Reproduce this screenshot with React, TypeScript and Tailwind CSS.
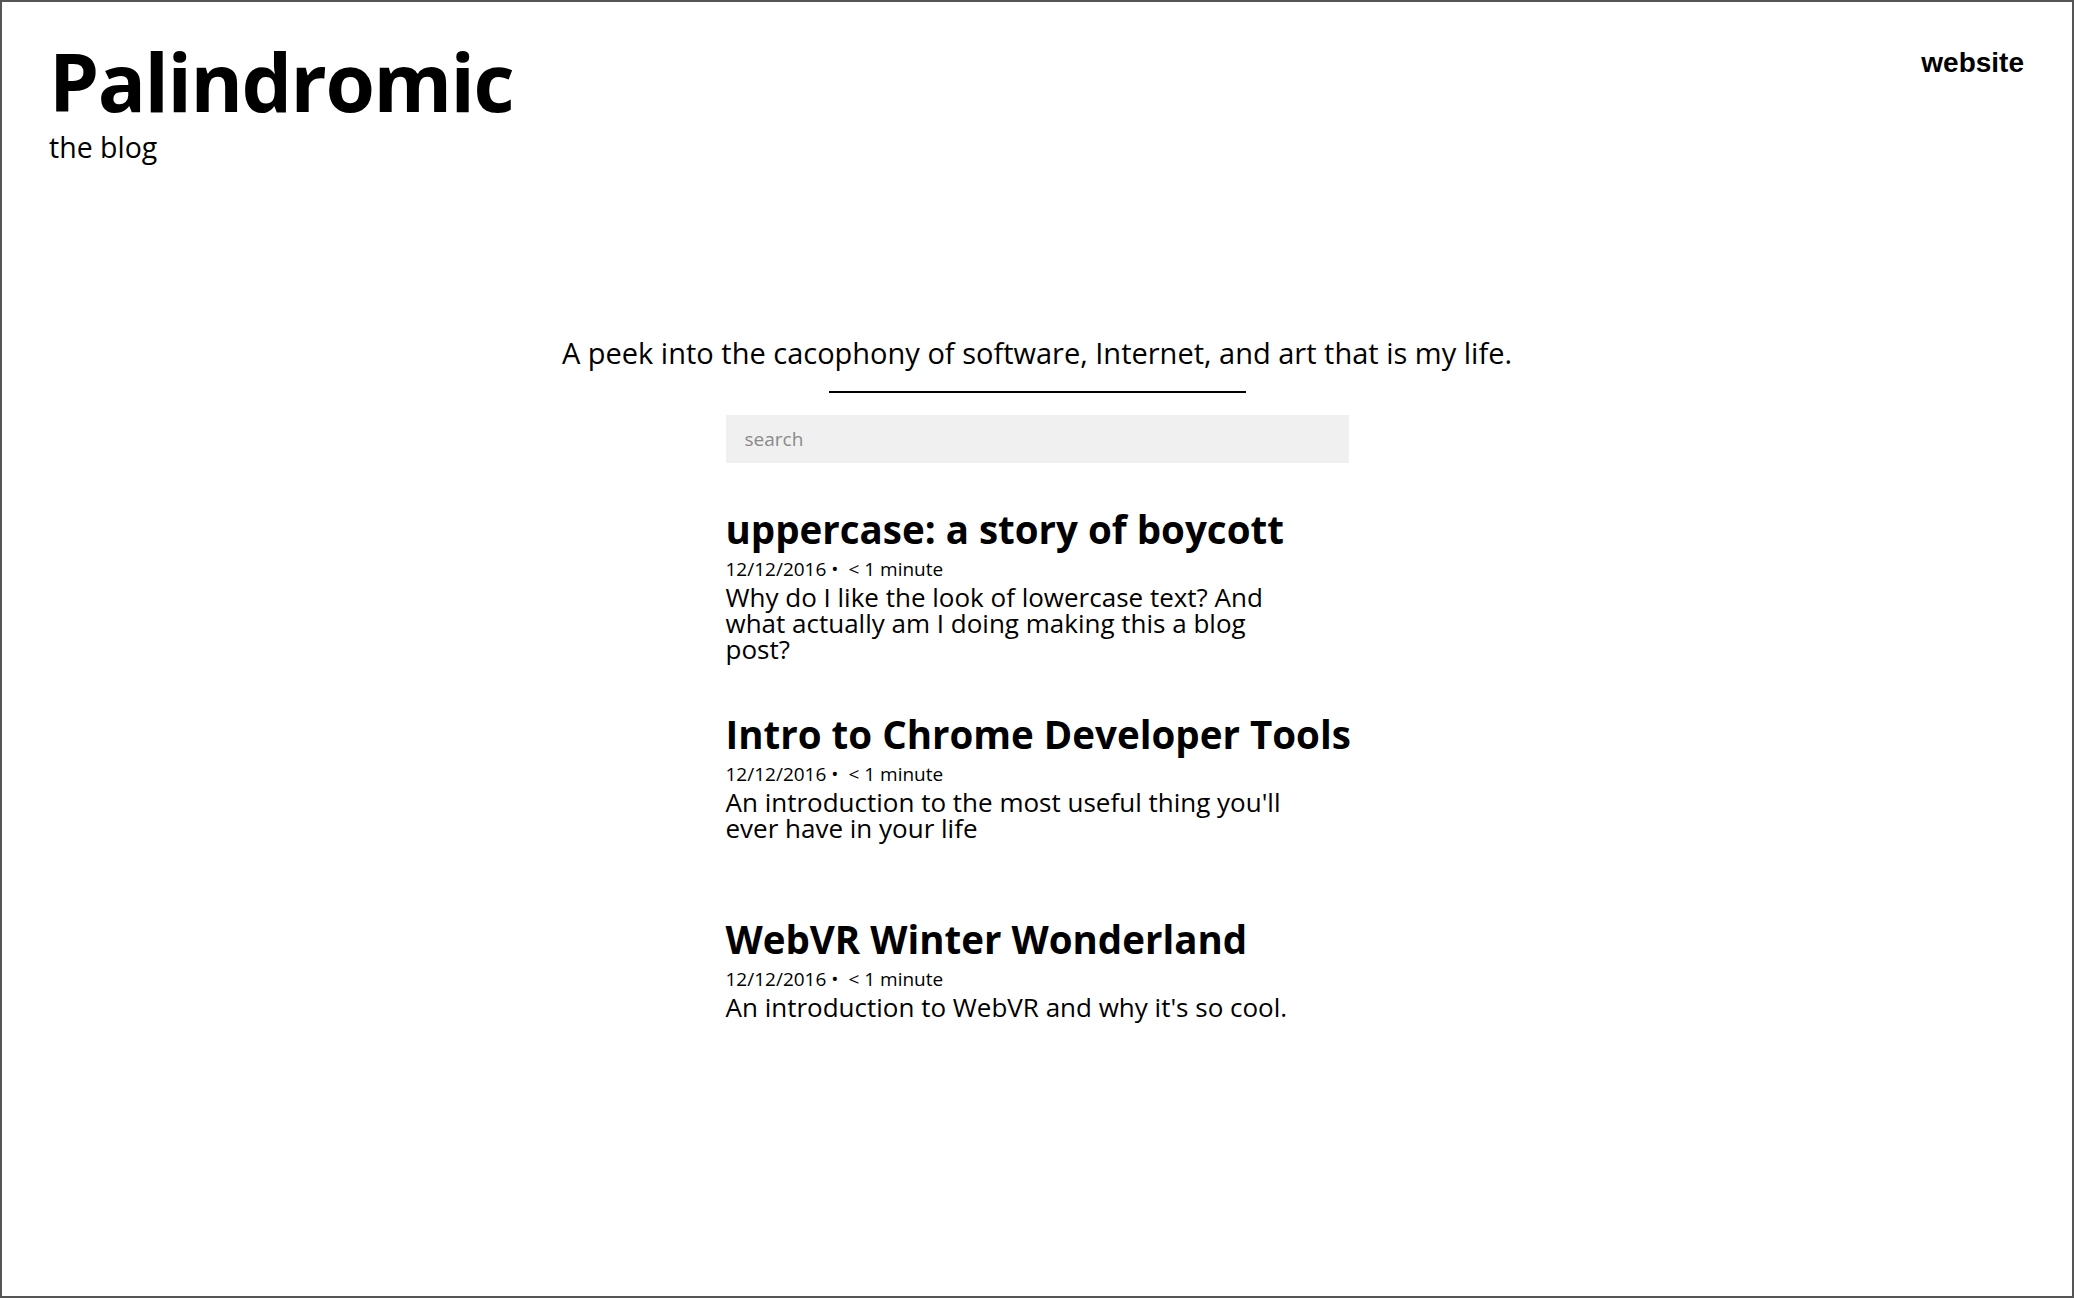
const posts = [
  {
    title: "uppercase: a story of boycott",
    date: "12/12/2016",
    readTime: "< 1 minute",
    excerpt:
      "Why do I like the look of lowercase text? And what actually am I doing making this a blog post?",
  },
  {
    title: "Intro to Chrome Developer Tools",
    date: "12/12/2016",
    readTime: "< 1 minute",
    excerpt: "An introduction to the most useful thing you'll ever have in your life",
  },
  {
    title: "WebVR Winter Wonderland",
    date: "12/12/2016",
    readTime: "< 1 minute",
    excerpt: "An introduction to WebVR and why it's so cool.",
  },
];

const App: React.FC = () => {
  return (
    <div className="box-border flex h-screen w-full flex-col border-2 border-[#555] bg-white font-['Open_Sans',sans-serif] text-black">
      <header className="flex items-start justify-between pl-[47px] pr-[48px]">
        <div>
          <h1 className="mt-[39px] text-[80px] font-bold leading-[80px] tracking-[-1.5px]">Palindromic</h1>
          <p className="mt-[12px] text-[28.5px] leading-[28px]">the blog</p>
        </div>
        <a
          href="#"
          className="mt-[47px] font-['Liberation_Sans',Arial,sans-serif] text-[28px] font-bold leading-[28px]"
        >
          website
        </a>
      </header>

      <main className="flex flex-col items-center">
        <p className="mt-[177px] text-[29px] leading-[29px]">
          A peek into the cacophony of software, Internet, and art that is my life.
        </p>
        <hr className="mt-[24px] w-[417px] border-0 border-t-2 border-black" />

        <input
          type="text"
          placeholder="search"
          className="mt-[22px] h-[48px] w-[623px] bg-[#f0f0f0] px-[19px] text-[19px] text-[#333] outline-none placeholder:text-[#8a8a8a]"
        />

        {/* fixed-height rows so the titles line up regardless of excerpt length */}
        <ul className="mt-[47px] w-[623px]">
          {posts.map((post) => (
            <li key={post.title} className="h-[205px]">
              <h2 className="whitespace-nowrap text-[38.5px] font-bold leading-[38.5px]">{post.title}</h2>
              <div className="mt-[11px] text-[19px] leading-[19px]">
                <span>{post.date} •</span>
                <span className="ml-[10px]">{post.readTime}</span>
              </div>
              <p className="mt-[5px] max-w-[570px] text-[26px] leading-[26px]">{post.excerpt}</p>
            </li>
          ))}
        </ul>
      </main>
    </div>
  );
};

export default App;
